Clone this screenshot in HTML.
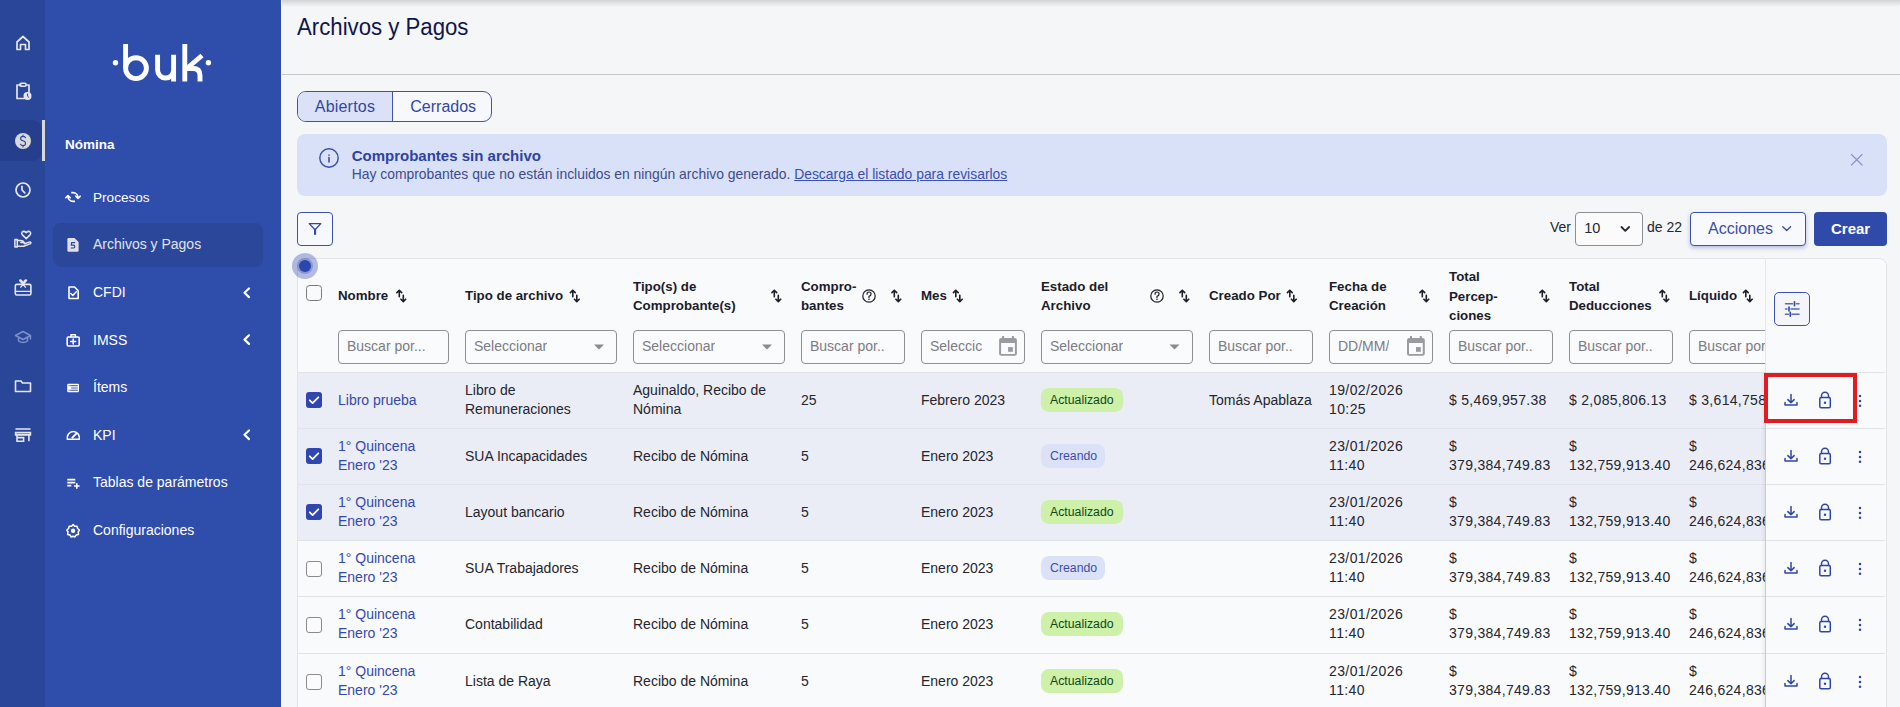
<!DOCTYPE html>
<html><head><meta charset="utf-8">
<style>
*{box-sizing:border-box;margin:0;padding:0}
html,body{width:1900px;height:707px;overflow:hidden;background:#f5f6f8;font-family:"Liberation Sans",sans-serif;color:#26262e;position:relative}
.a{position:absolute}
.t{position:absolute;white-space:nowrap}
#rail{left:0;top:0;width:45px;height:707px;background:#2a4698}
#side{left:45px;top:0;width:236px;height:707px;background:#2f4dab}
.nav{position:absolute;left:93px;font-size:14px;color:#fff;white-space:nowrap;line-height:16px}
#topsh{left:281px;top:0;width:1619px;height:7px;background:linear-gradient(#d3d4d7,#f5f6f8)}
</style></head>
<body>
<div id="rail" class="a"></div>
<div id="side" class="a"></div>
<div id="topsh" class="a"></div>
<!-- rail active -->
<div class="a" style="left:-10px;top:120px;width:52px;height:41px;background:#263f8c;border-radius:10px"></div>
<div class="a" style="left:42px;top:120px;width:3px;height:41px;background:#d9d9dc"></div>
<div class="a" style="left:53px;top:223px;width:210px;height:44px;background:#2b479a;border-radius:8px"></div>
<div class="nav" style="left:65px;top:137.4px;font-weight:700;font-size:13.5px">Nómina</div>
<div class="nav" style="top:189.5px;font-size:13.6px">Procesos</div>
<div class="nav" style="top:236.3px;color:#e2e3ea">Archivos y Pagos</div>
<div class="nav" style="top:284.3px">CFDI</div>
<div class="nav" style="top:331.8px">IMSS</div>
<div class="nav" style="top:378.9px">Ítems</div>
<div class="nav" style="top:426.9px">KPI</div>
<div class="nav" style="top:474px">Tablas de parámetros</div>
<div class="nav" style="top:522.2px">Configuraciones</div>
<svg class="a" style="left:0;top:0" width="281" height="707" viewBox="0 0 281 707" fill="none" stroke="#f0f0f4" stroke-width="1.6" stroke-linecap="round" stroke-linejoin="round">
 <!-- logo -->
 <g fill="#fff" stroke="none"><circle cx="115.5" cy="62.7" r="2.7"/><circle cx="208.4" cy="62.7" r="2.7"/></g>
 <g stroke="#fff" stroke-width="4.9" stroke-linecap="butt">
  <path d="M125.6 44 V68.2"/>
  <circle cx="136" cy="68.2" r="10.4"/>
  <path d="M157.6 54.8 V70 A8 8 0 0 0 173.6 70 M173.6 54.8 V81.5"/>
  <path d="M184.8 44 V81.5"/>
  <path d="M202 55.5 L188.5 67"/><path d="M187 68.5 H193 Q200 68.5 200 75.5 V81.5"/>
 </g>
 <!-- rail icons -->
 <path d="M17 49.5 V42 L23 36.5 L29 42 V49.5 H25.5 V44.5 H20.5 V49.5 Z" stroke="#e6e6ec" stroke-width="1.7"/>
 <path d="M21 85 H17 V98.5 H24 M26.5 85 H29 V92" stroke="#e6e6ec" stroke-width="1.7"/>
 <rect x="20" y="83.3" width="6" height="3" rx="1" stroke="#e6e6ec" stroke-width="1.5"/>
 <circle cx="27.5" cy="96" r="4" fill="#e6e6ec" stroke="none"/>
 <path d="M27.5 94 V96.2 L28.8 97.3" stroke="#2a4698" stroke-width="1"/>
 <circle cx="23" cy="141" r="8" fill="#d9d9dc" stroke="none"/>
 <path d="M25.4 137.6 Q24.6 136.4 23 136.4 Q20.6 136.4 20.6 138.6 Q20.6 140.4 23 140.8 Q25.5 141.3 25.5 143.4 Q25.5 145.6 23 145.6 Q21.3 145.6 20.5 144.3 M23 135 V136.4 M23 145.6 V147" stroke="#2a4698" stroke-width="1.1"/>
 <circle cx="23" cy="190" r="7" stroke="#e6e6ec" stroke-width="1.7"/>
 <path d="M22 186.3 V190 L24.8 192.8" stroke="#e6e6ec" stroke-width="1.7"/>
 <path d="M14.9 239.6 H17.3 V246.9 H14.9 Z" stroke="#e6e6ec" stroke-width="1.5"/>
 <path d="M17.3 240.6 H20.5 Q23.2 240.6 24.3 242.6 H20.8 M17.3 246.3 H23.6 L30.6 243.6 Q31.4 242.1 29.9 241.9 L24.3 243.7" stroke="#e6e6ec" stroke-width="1.5"/>
 <path d="M26.2 238.6 L22.4 234.9 Q21 233.4 22.2 232 Q23.9 230.5 26.2 232.6 Q28.5 230.5 30.2 232 Q31.4 233.4 30 234.9 Z" stroke="#e6e6ec" stroke-width="1.5"/>
 <rect x="15.3" y="284.4" width="15.6" height="10.6" rx="1.4" stroke="#e6e6ec" stroke-width="1.6"/>
 <path d="M15.3 291.3 H30.9 M23.1 284.4 L20 281 Q19 280 20.3 280 Q22.5 280.5 23.1 284.4 Q23.7 280.5 25.9 280 Q27.2 280 26.2 281 L23.1 284.4 M23.1 284.4 L20.8 287.2 M23.1 284.4 L25.4 287.2" stroke="#e6e6ec" stroke-width="1.3"/>
 <path d="M23 331.5 L15.5 335.5 L23 339.5 L30.5 335.5 Z M18.5 337.5 V341 Q23 344 27.5 341 V337.5 M30.5 335.5 V339" stroke="#7d8fcb" stroke-width="1.5"/>
 <path d="M15.5 391.5 V381 H21 L22.5 383 H30.5 V391.5 Z" stroke="#e6e6ec" stroke-width="1.6"/>
 <path d="M15.5 429 H30.5 M15.6 432.6 H30.4 V434.9 H15.6 Z M17 435 V441.2 H23.6 V437.6 H17 M28.9 435 V441.2" stroke="#e6e6ec" stroke-width="1.6" stroke-linejoin="miter" stroke-linecap="butt"/>
 <!-- sidebar icons -->
 <path d="M71.2 192.6 H73 A5 5 0 0 1 78 197.4 M75 201.4 H73 A5 5 0 0 1 68 196.6" stroke="#fff" stroke-width="1.6" stroke-linecap="butt"/>
 <path d="M75.8 196.2 L78 198.4 L80.2 196.2 M65.8 197.8 L68 195.6 L70.2 197.8" stroke="#fff" stroke-width="1.6"/>
 <path d="M68.5 238 H74.5 L78.6 242 V250.6 Q78.6 251.8 77.4 251.8 H68.6 Q67.4 251.8 67.4 250.6 V239.2 Q67.4 238 68.5 238 Z" fill="#e0e1e8" stroke="none"/>
 <path d="M74.7 242.6 H71.6 L71.3 245.2 H73.6 Q74.8 245.2 74.8 246.6 Q74.8 248 73.6 248 H71.2" stroke="#2b479a" stroke-width="1.2"/>
 <path d="M69 287 H74.5 L78.2 290.8 V298.5 H69 Z" stroke="#fff" stroke-width="1.6"/>
 <path d="M70.8 293.5 L72.8 295.5 L76.3 291.8" stroke="#fff" stroke-width="1.5"/>
 <rect x="67.2" y="337" width="12" height="9" rx="1.2" stroke="#fff" stroke-width="1.6"/>
 <path d="M71 337 V334.8 H75.4 V337 M73.2 339 V344 M70.7 341.5 H75.7" stroke="#fff" stroke-width="1.5"/>
 <rect x="67.2" y="383.7" width="11.8" height="8.5" rx="1.2" fill="#fff" stroke="none"/>
 <path d="M68.6 385.7 H77.8 M68.6 390.2 H77.8" stroke="#2f4dab" stroke-width="1" stroke-linecap="butt"/>
 <path d="M71.2 388 H77.8" stroke="#8d9ad0" stroke-width="1.6" stroke-linecap="butt"/>
 <path d="M69.9 385.2 V390.7" stroke="#fff" stroke-width="0.8" stroke-linecap="butt"/>
 <path d="M67.4 439.2 A6.1 6.1 0 1 1 79.2 439.2 Z" stroke="#fff" stroke-width="1.6"/>
 <path d="M72.4 437.6 L76.2 433.6" stroke="#fff" stroke-width="2"/>
 <path d="M67.3 479.6 H75.3 M67.3 482.6 H75.3 M67.3 485.6 H71.3 M74 486 H79.6 M76.8 483.2 V488.8" stroke="#fff" stroke-width="1.6" stroke-linecap="butt"/>
 <path d="M73.1 524.5 L74.6 526.3 L77 526.2 L77.6 528.5 L79.4 530 L78.2 532 L78.5 534.4 L76.2 535 L74.8 537 L73.1 536.2 L71.2 537 L69.9 535 L67.6 534.4 L68 532 L66.8 530 L68.6 528.5 L69.2 526.2 L71.6 526.3 Z" stroke="#fff" stroke-width="1.5"/>
 <circle cx="73.1" cy="530.8" r="2.2" fill="#fff" stroke="none"/>
 <!-- chevrons -->
 <path d="M249 288.5 L244.5 292.8 L249 297.1 M249 335.3 L244.5 339.6 L249 343.9 M249 430.5 L244.5 434.8 L249 439.1" stroke="#fff" stroke-width="2.2"/>
</svg>
<div class="t" style="left:297.3px;top:14.10px;font-size:23px;line-height:26px;font-weight:400;color:#10154a;transform:scaleX(0.965);transform-origin:0 0;">Archivos y Pagos</div>
<div class="a" style="left:281px;top:74px;width:1619px;height:1px;background:#c6c7cb"></div>
<div class="a" style="left:297px;top:91px;width:195px;height:31px;border:1px solid #3d52a8;border-radius:9px;overflow:hidden;background:#f7f8fb"></div>
<div class="a" style="left:298px;top:92px;width:94px;height:29px;background:#dbe2f7;border-radius:8px 0 0 8px"></div>
<div class="a" style="left:392px;top:91px;width:1px;height:31px;background:#3d52a8"></div>
<div class="t" style="left:314.8px;top:98.00px;font-size:16px;line-height:17px;font-weight:400;color:#3047a6;letter-spacing:0.2px;">Abiertos</div>
<div class="t" style="left:410.3px;top:98.00px;font-size:16px;line-height:17px;font-weight:400;color:#3047a6;">Cerrados</div>
<div class="a" style="left:297px;top:134px;width:1590px;height:62px;background:#d9e1f9;border-radius:8px"></div>
<div class="t" style="left:351.7px;top:146.70px;font-size:15px;line-height:17px;font-weight:700;color:#2f43a0;">Comprobantes sin archivo</div>
<div class="t" style="left:351.7px;top:165.70px;font-size:13.9px;line-height:16px;font-weight:400;color:#3e4b8c;">Hay comprobantes que no están incluidos en ningún archivo generado. <span style="color:#3a4fb0;text-decoration:underline">Descarga el listado para revisarlos</span></div>
<div class="a" style="left:297px;top:212px;width:36px;height:34px;border:1px solid #3d52a8;border-radius:4px;background:#f7f8fb"></div>
<div class="t" style="left:1550px;top:219.10px;font-size:14px;line-height:16px;font-weight:400;color:#26262e;">Ver</div>
<div class="a" style="left:1575px;top:212px;width:68px;height:33.5px;border:1px solid #8d8d94;border-radius:4px;background:#fbfbfc"></div>
<div class="t" style="left:1584.2px;top:220.00px;font-size:14.5px;line-height:16px;font-weight:400;color:#26262e;">10</div>
<div class="t" style="left:1647px;top:219.10px;font-size:14px;line-height:16px;font-weight:400;color:#26262e;">de 22</div>
<div class="a" style="left:1690px;top:212px;width:116px;height:33.5px;border:1.2px solid #3b51ab;border-radius:4px;background:#f8f9fc;box-shadow:0 2px 4px rgba(59,81,171,0.35)"></div>
<div class="t" style="left:1708px;top:220.00px;font-size:16px;line-height:17px;font-weight:400;color:#3b4fa6;">Acciones</div>
<div class="a" style="left:1814px;top:212.3px;width:73px;height:33.3px;background:#2f4aa8;border-radius:4px"></div>
<div class="t" style="left:1831px;top:220.00px;font-size:15px;line-height:17px;font-weight:700;color:#ffffff;">Crear</div>
<div class="a" style="left:297px;top:258px;width:1590px;height:460px;background:#f9fafc;border:1px solid #e2e4e8;border-radius:8px 8px 0 0"></div>
<div class="a" style="left:281px;top:0px;width:1px;height:707px;background:#fbfbfd"></div>
<div class="t" style="left:338px;top:288.10px;font-size:13.3px;line-height:15px;font-weight:700;color:#1c1c2a;">Nombre</div>
<div class="t" style="left:465px;top:288.10px;font-size:13.3px;line-height:15px;font-weight:700;color:#1c1c2a;">Tipo de archivo</div>
<div class="t" style="left:633px;top:279.20px;font-size:13.3px;line-height:15px;font-weight:700;color:#1c1c2a;">Tipo(s) de</div>
<div class="t" style="left:633px;top:298.10px;font-size:13.3px;line-height:15px;font-weight:700;color:#1c1c2a;">Comprobante(s)</div>
<div class="t" style="left:801px;top:279.20px;font-size:13.3px;line-height:15px;font-weight:700;color:#1c1c2a;">Compro-</div>
<div class="t" style="left:801px;top:298.10px;font-size:13.3px;line-height:15px;font-weight:700;color:#1c1c2a;">bantes</div>
<div class="t" style="left:921px;top:288.10px;font-size:13.3px;line-height:15px;font-weight:700;color:#1c1c2a;">Mes</div>
<div class="t" style="left:1041px;top:279.20px;font-size:13.3px;line-height:15px;font-weight:700;color:#1c1c2a;">Estado del</div>
<div class="t" style="left:1041px;top:298.10px;font-size:13.3px;line-height:15px;font-weight:700;color:#1c1c2a;">Archivo</div>
<div class="t" style="left:1209px;top:288.10px;font-size:13.3px;line-height:15px;font-weight:700;color:#1c1c2a;">Creado Por</div>
<div class="t" style="left:1329px;top:279.20px;font-size:13.3px;line-height:15px;font-weight:700;color:#1c1c2a;">Fecha de</div>
<div class="t" style="left:1329px;top:298.10px;font-size:13.3px;line-height:15px;font-weight:700;color:#1c1c2a;">Creación</div>
<div class="t" style="left:1449px;top:269.40px;font-size:13.3px;line-height:15px;font-weight:700;color:#1c1c2a;">Total</div>
<div class="t" style="left:1449px;top:288.60px;font-size:13.3px;line-height:15px;font-weight:700;color:#1c1c2a;">Percep-</div>
<div class="t" style="left:1449px;top:308.10px;font-size:13.3px;line-height:15px;font-weight:700;color:#1c1c2a;">ciones</div>
<div class="t" style="left:1569px;top:279.20px;font-size:13.3px;line-height:15px;font-weight:700;color:#1c1c2a;">Total</div>
<div class="t" style="left:1569px;top:298.10px;font-size:13.3px;line-height:15px;font-weight:700;color:#1c1c2a;">Deducciones</div>
<div class="t" style="left:1689px;top:288.10px;font-size:13.3px;line-height:15px;font-weight:700;color:#1c1c2a;">Líquido</div>
<div class="a" style="left:338px;top:330px;width:111px;height:34px;border:1px solid #8f9096;border-radius:4px;background:#fafbfc"></div>
<div class="t" style="left:347px;top:338.00px;font-size:14px;line-height:16px;font-weight:400;color:#7c7c84;white-space:nowrap;overflow:hidden;">Buscar por...</div>
<div class="a" style="left:465px;top:330px;width:152px;height:34px;border:1px solid #8f9096;border-radius:4px;background:#fafbfc"></div>
<div class="t" style="left:474px;top:338.00px;font-size:14px;line-height:16px;font-weight:400;color:#7c7c84;white-space:nowrap;overflow:hidden;">Seleccionar</div>
<div class="a" style="left:633px;top:330px;width:152px;height:34px;border:1px solid #8f9096;border-radius:4px;background:#fafbfc"></div>
<div class="t" style="left:642px;top:338.00px;font-size:14px;line-height:16px;font-weight:400;color:#7c7c84;white-space:nowrap;overflow:hidden;">Seleccionar</div>
<div class="a" style="left:801px;top:330px;width:104px;height:34px;border:1px solid #8f9096;border-radius:4px;background:#fafbfc"></div>
<div class="t" style="left:810px;top:338.00px;font-size:14px;line-height:16px;font-weight:400;color:#7c7c84;white-space:nowrap;overflow:hidden;">Buscar por..</div>
<div class="a" style="left:921px;top:330px;width:104px;height:34px;border:1px solid #8f9096;border-radius:4px;background:#fafbfc"></div>
<div class="t" style="left:930px;top:338.00px;font-size:14px;line-height:16px;font-weight:400;color:#7c7c84;white-space:nowrap;overflow:hidden;">Seleccic</div>
<div class="a" style="left:1041px;top:330px;width:152px;height:34px;border:1px solid #8f9096;border-radius:4px;background:#fafbfc"></div>
<div class="t" style="left:1050px;top:338.00px;font-size:14px;line-height:16px;font-weight:400;color:#7c7c84;white-space:nowrap;overflow:hidden;">Seleccionar</div>
<div class="a" style="left:1209px;top:330px;width:104px;height:34px;border:1px solid #8f9096;border-radius:4px;background:#fafbfc"></div>
<div class="t" style="left:1218px;top:338.00px;font-size:14px;line-height:16px;font-weight:400;color:#7c7c84;white-space:nowrap;overflow:hidden;">Buscar por..</div>
<div class="a" style="left:1329px;top:330px;width:104px;height:34px;border:1px solid #8f9096;border-radius:4px;background:#fafbfc"></div>
<div class="t" style="left:1338px;top:338.00px;font-size:14px;line-height:16px;font-weight:400;color:#7c7c84;white-space:nowrap;overflow:hidden;">DD/MM/</div>
<div class="a" style="left:1449px;top:330px;width:104px;height:34px;border:1px solid #8f9096;border-radius:4px;background:#fafbfc"></div>
<div class="t" style="left:1458px;top:338.00px;font-size:14px;line-height:16px;font-weight:400;color:#7c7c84;white-space:nowrap;overflow:hidden;">Buscar por..</div>
<div class="a" style="left:1569px;top:330px;width:104px;height:34px;border:1px solid #8f9096;border-radius:4px;background:#fafbfc"></div>
<div class="t" style="left:1578px;top:338.00px;font-size:14px;line-height:16px;font-weight:400;color:#7c7c84;white-space:nowrap;overflow:hidden;">Buscar por..</div>
<div class="a" style="left:1689px;top:330px;width:110px;height:34px;border:1px solid #8f9096;border-radius:4px;background:#fafbfc"></div>
<div class="t" style="left:1698px;top:338.00px;font-size:14px;line-height:16px;font-weight:400;color:#7c7c84;white-space:nowrap;overflow:hidden;">Buscar por</div>
<div class="a" style="left:298px;top:372px;width:1468px;height:56.2px;background:#eaedf6;border-top:1px solid #e1e3e9"></div>
<div class="a" style="left:306px;top:392.1px;width:16px;height:16px;background:#2f46b0;border-radius:3px"></div>
<div class="t" style="left:338px;top:391.60px;font-size:14px;line-height:16px;font-weight:400;color:#3349ab;">Libro prueba</div>
<div class="t" style="left:465px;top:382.20px;font-size:14px;line-height:16px;font-weight:400;color:#25252e;">Libro de</div>
<div class="t" style="left:465px;top:401.00px;font-size:14px;line-height:16px;font-weight:400;color:#25252e;">Remuneraciones</div>
<div class="t" style="left:633px;top:382.20px;font-size:14px;line-height:16px;font-weight:400;color:#25252e;">Aguinaldo, Recibo de</div>
<div class="t" style="left:633px;top:401.00px;font-size:14px;line-height:16px;font-weight:400;color:#25252e;">Nómina</div>
<div class="t" style="left:801px;top:391.60px;font-size:14px;line-height:16px;font-weight:400;color:#25252e;">25</div>
<div class="t" style="left:921px;top:391.60px;font-size:14px;line-height:16px;font-weight:400;color:#25252e;">Febrero 2023</div>
<div class="a" style="left:1041px;top:388px;width:82px;height:24px;background:#cdf1a9;border-radius:8px"></div>
<div class="t" style="left:1050px;top:392.70px;font-size:12.3px;line-height:14px;font-weight:400;color:#124615;">Actualizado</div>
<div class="t" style="left:1209px;top:391.60px;font-size:14px;line-height:16px;font-weight:400;color:#25252e;">Tomás Apablaza</div>
<div class="t" style="left:1329px;top:382.20px;font-size:14px;line-height:16px;font-weight:400;color:#25252e;letter-spacing:0.4px;">19/02/2026</div>
<div class="t" style="left:1329px;top:401.00px;font-size:14px;line-height:16px;font-weight:400;color:#25252e;letter-spacing:0.4px;">10:25</div>
<div class="t" style="left:1449px;top:391.60px;font-size:14px;line-height:16px;font-weight:400;color:#25252e;letter-spacing:0.3px;">$ 5,469,957.38</div>
<div class="t" style="left:1569px;top:391.60px;font-size:14px;line-height:16px;font-weight:400;color:#25252e;letter-spacing:0.3px;">$ 2,085,806.13</div>
<div class="t" style="left:1689px;top:391.60px;font-size:14px;line-height:16px;font-weight:400;color:#25252e;width:76px;overflow:hidden;white-space:nowrap;letter-spacing:0.3px;">$ 3,614,758.25</div>
<div class="a" style="left:298px;top:428px;width:1468px;height:56.2px;background:#eaedf6;border-top:1px solid #e1e3e9"></div>
<div class="a" style="left:306px;top:448.1px;width:16px;height:16px;background:#2f46b0;border-radius:3px"></div>
<div class="t" style="left:338px;top:438.20px;font-size:14px;line-height:16px;font-weight:400;color:#3349ab;">1° Quincena</div>
<div class="t" style="left:338px;top:457.00px;font-size:14px;line-height:16px;font-weight:400;color:#3349ab;">Enero '23</div>
<div class="t" style="left:465px;top:447.60px;font-size:14px;line-height:16px;font-weight:400;color:#25252e;">SUA Incapacidades</div>
<div class="t" style="left:633px;top:447.60px;font-size:14px;line-height:16px;font-weight:400;color:#25252e;">Recibo de Nómina</div>
<div class="t" style="left:801px;top:447.60px;font-size:14px;line-height:16px;font-weight:400;color:#25252e;">5</div>
<div class="t" style="left:921px;top:447.60px;font-size:14px;line-height:16px;font-weight:400;color:#25252e;">Enero 2023</div>
<div class="a" style="left:1041px;top:444px;width:64px;height:24px;background:#dbe2f8;border-radius:8px"></div>
<div class="t" style="left:1050px;top:448.70px;font-size:12.3px;line-height:14px;font-weight:400;color:#3b4fa8;">Creando</div>
<div class="t" style="left:1329px;top:438.20px;font-size:14px;line-height:16px;font-weight:400;color:#25252e;letter-spacing:0.4px;">23/01/2026</div>
<div class="t" style="left:1329px;top:457.00px;font-size:14px;line-height:16px;font-weight:400;color:#25252e;letter-spacing:0.4px;">11:40</div>
<div class="t" style="left:1449px;top:438.20px;font-size:14px;line-height:16px;font-weight:400;color:#25252e;letter-spacing:0.3px;">$</div>
<div class="t" style="left:1449px;top:457.00px;font-size:14px;line-height:16px;font-weight:400;color:#25252e;letter-spacing:0.3px;">379,384,749.83</div>
<div class="t" style="left:1569px;top:438.20px;font-size:14px;line-height:16px;font-weight:400;color:#25252e;letter-spacing:0.3px;">$</div>
<div class="t" style="left:1569px;top:457.00px;font-size:14px;line-height:16px;font-weight:400;color:#25252e;letter-spacing:0.3px;">132,759,913.40</div>
<div class="t" style="left:1689px;top:438.20px;font-size:14px;line-height:16px;font-weight:400;color:#25252e;width:76px;overflow:hidden;white-space:nowrap;letter-spacing:0.3px;">$</div>
<div class="t" style="left:1689px;top:457.00px;font-size:14px;line-height:16px;font-weight:400;color:#25252e;width:76px;overflow:hidden;white-space:nowrap;letter-spacing:0.3px;">246,624,836.43</div>
<div class="a" style="left:298px;top:484px;width:1468px;height:56.2px;background:#eaedf6;border-top:1px solid #e1e3e9"></div>
<div class="a" style="left:306px;top:504.1px;width:16px;height:16px;background:#2f46b0;border-radius:3px"></div>
<div class="t" style="left:338px;top:494.20px;font-size:14px;line-height:16px;font-weight:400;color:#3349ab;">1° Quincena</div>
<div class="t" style="left:338px;top:513.00px;font-size:14px;line-height:16px;font-weight:400;color:#3349ab;">Enero '23</div>
<div class="t" style="left:465px;top:503.60px;font-size:14px;line-height:16px;font-weight:400;color:#25252e;">Layout bancario</div>
<div class="t" style="left:633px;top:503.60px;font-size:14px;line-height:16px;font-weight:400;color:#25252e;">Recibo de Nómina</div>
<div class="t" style="left:801px;top:503.60px;font-size:14px;line-height:16px;font-weight:400;color:#25252e;">5</div>
<div class="t" style="left:921px;top:503.60px;font-size:14px;line-height:16px;font-weight:400;color:#25252e;">Enero 2023</div>
<div class="a" style="left:1041px;top:500px;width:82px;height:24px;background:#cdf1a9;border-radius:8px"></div>
<div class="t" style="left:1050px;top:504.70px;font-size:12.3px;line-height:14px;font-weight:400;color:#124615;">Actualizado</div>
<div class="t" style="left:1329px;top:494.20px;font-size:14px;line-height:16px;font-weight:400;color:#25252e;letter-spacing:0.4px;">23/01/2026</div>
<div class="t" style="left:1329px;top:513.00px;font-size:14px;line-height:16px;font-weight:400;color:#25252e;letter-spacing:0.4px;">11:40</div>
<div class="t" style="left:1449px;top:494.20px;font-size:14px;line-height:16px;font-weight:400;color:#25252e;letter-spacing:0.3px;">$</div>
<div class="t" style="left:1449px;top:513.00px;font-size:14px;line-height:16px;font-weight:400;color:#25252e;letter-spacing:0.3px;">379,384,749.83</div>
<div class="t" style="left:1569px;top:494.20px;font-size:14px;line-height:16px;font-weight:400;color:#25252e;letter-spacing:0.3px;">$</div>
<div class="t" style="left:1569px;top:513.00px;font-size:14px;line-height:16px;font-weight:400;color:#25252e;letter-spacing:0.3px;">132,759,913.40</div>
<div class="t" style="left:1689px;top:494.20px;font-size:14px;line-height:16px;font-weight:400;color:#25252e;width:76px;overflow:hidden;white-space:nowrap;letter-spacing:0.3px;">$</div>
<div class="t" style="left:1689px;top:513.00px;font-size:14px;line-height:16px;font-weight:400;color:#25252e;width:76px;overflow:hidden;white-space:nowrap;letter-spacing:0.3px;">246,624,836.43</div>
<div class="a" style="left:298px;top:540px;width:1468px;height:56.2px;background:#f9fafc;border-top:1px solid #e1e3e9"></div>
<div class="a" style="left:306px;top:560.7px;width:16px;height:16px;border:1px solid #8a8a90;border-radius:3px;background:#fbfbfc"></div>
<div class="t" style="left:338px;top:550.20px;font-size:14px;line-height:16px;font-weight:400;color:#3349ab;">1° Quincena</div>
<div class="t" style="left:338px;top:569.00px;font-size:14px;line-height:16px;font-weight:400;color:#3349ab;">Enero '23</div>
<div class="t" style="left:465px;top:559.60px;font-size:14px;line-height:16px;font-weight:400;color:#25252e;">SUA Trabajadores</div>
<div class="t" style="left:633px;top:559.60px;font-size:14px;line-height:16px;font-weight:400;color:#25252e;">Recibo de Nómina</div>
<div class="t" style="left:801px;top:559.60px;font-size:14px;line-height:16px;font-weight:400;color:#25252e;">5</div>
<div class="t" style="left:921px;top:559.60px;font-size:14px;line-height:16px;font-weight:400;color:#25252e;">Enero 2023</div>
<div class="a" style="left:1041px;top:556px;width:64px;height:24px;background:#dbe2f8;border-radius:8px"></div>
<div class="t" style="left:1050px;top:560.70px;font-size:12.3px;line-height:14px;font-weight:400;color:#3b4fa8;">Creando</div>
<div class="t" style="left:1329px;top:550.20px;font-size:14px;line-height:16px;font-weight:400;color:#25252e;letter-spacing:0.4px;">23/01/2026</div>
<div class="t" style="left:1329px;top:569.00px;font-size:14px;line-height:16px;font-weight:400;color:#25252e;letter-spacing:0.4px;">11:40</div>
<div class="t" style="left:1449px;top:550.20px;font-size:14px;line-height:16px;font-weight:400;color:#25252e;letter-spacing:0.3px;">$</div>
<div class="t" style="left:1449px;top:569.00px;font-size:14px;line-height:16px;font-weight:400;color:#25252e;letter-spacing:0.3px;">379,384,749.83</div>
<div class="t" style="left:1569px;top:550.20px;font-size:14px;line-height:16px;font-weight:400;color:#25252e;letter-spacing:0.3px;">$</div>
<div class="t" style="left:1569px;top:569.00px;font-size:14px;line-height:16px;font-weight:400;color:#25252e;letter-spacing:0.3px;">132,759,913.40</div>
<div class="t" style="left:1689px;top:550.20px;font-size:14px;line-height:16px;font-weight:400;color:#25252e;width:76px;overflow:hidden;white-space:nowrap;letter-spacing:0.3px;">$</div>
<div class="t" style="left:1689px;top:569.00px;font-size:14px;line-height:16px;font-weight:400;color:#25252e;width:76px;overflow:hidden;white-space:nowrap;letter-spacing:0.3px;">246,624,836.43</div>
<div class="a" style="left:298px;top:596px;width:1468px;height:56.2px;background:#f9fafc;border-top:1px solid #e1e3e9"></div>
<div class="a" style="left:306px;top:616.7px;width:16px;height:16px;border:1px solid #8a8a90;border-radius:3px;background:#fbfbfc"></div>
<div class="t" style="left:338px;top:606.20px;font-size:14px;line-height:16px;font-weight:400;color:#3349ab;">1° Quincena</div>
<div class="t" style="left:338px;top:625.00px;font-size:14px;line-height:16px;font-weight:400;color:#3349ab;">Enero '23</div>
<div class="t" style="left:465px;top:615.60px;font-size:14px;line-height:16px;font-weight:400;color:#25252e;">Contabilidad</div>
<div class="t" style="left:633px;top:615.60px;font-size:14px;line-height:16px;font-weight:400;color:#25252e;">Recibo de Nómina</div>
<div class="t" style="left:801px;top:615.60px;font-size:14px;line-height:16px;font-weight:400;color:#25252e;">5</div>
<div class="t" style="left:921px;top:615.60px;font-size:14px;line-height:16px;font-weight:400;color:#25252e;">Enero 2023</div>
<div class="a" style="left:1041px;top:612px;width:82px;height:24px;background:#cdf1a9;border-radius:8px"></div>
<div class="t" style="left:1050px;top:616.70px;font-size:12.3px;line-height:14px;font-weight:400;color:#124615;">Actualizado</div>
<div class="t" style="left:1329px;top:606.20px;font-size:14px;line-height:16px;font-weight:400;color:#25252e;letter-spacing:0.4px;">23/01/2026</div>
<div class="t" style="left:1329px;top:625.00px;font-size:14px;line-height:16px;font-weight:400;color:#25252e;letter-spacing:0.4px;">11:40</div>
<div class="t" style="left:1449px;top:606.20px;font-size:14px;line-height:16px;font-weight:400;color:#25252e;letter-spacing:0.3px;">$</div>
<div class="t" style="left:1449px;top:625.00px;font-size:14px;line-height:16px;font-weight:400;color:#25252e;letter-spacing:0.3px;">379,384,749.83</div>
<div class="t" style="left:1569px;top:606.20px;font-size:14px;line-height:16px;font-weight:400;color:#25252e;letter-spacing:0.3px;">$</div>
<div class="t" style="left:1569px;top:625.00px;font-size:14px;line-height:16px;font-weight:400;color:#25252e;letter-spacing:0.3px;">132,759,913.40</div>
<div class="t" style="left:1689px;top:606.20px;font-size:14px;line-height:16px;font-weight:400;color:#25252e;width:76px;overflow:hidden;white-space:nowrap;letter-spacing:0.3px;">$</div>
<div class="t" style="left:1689px;top:625.00px;font-size:14px;line-height:16px;font-weight:400;color:#25252e;width:76px;overflow:hidden;white-space:nowrap;letter-spacing:0.3px;">246,624,836.43</div>
<div class="a" style="left:298px;top:653px;width:1468px;height:56.2px;background:#f9fafc;border-top:1px solid #e1e3e9"></div>
<div class="a" style="left:306px;top:673.7px;width:16px;height:16px;border:1px solid #8a8a90;border-radius:3px;background:#fbfbfc"></div>
<div class="t" style="left:338px;top:663.20px;font-size:14px;line-height:16px;font-weight:400;color:#3349ab;">1° Quincena</div>
<div class="t" style="left:338px;top:682.00px;font-size:14px;line-height:16px;font-weight:400;color:#3349ab;">Enero '23</div>
<div class="t" style="left:465px;top:672.60px;font-size:14px;line-height:16px;font-weight:400;color:#25252e;">Lista de Raya</div>
<div class="t" style="left:633px;top:672.60px;font-size:14px;line-height:16px;font-weight:400;color:#25252e;">Recibo de Nómina</div>
<div class="t" style="left:801px;top:672.60px;font-size:14px;line-height:16px;font-weight:400;color:#25252e;">5</div>
<div class="t" style="left:921px;top:672.60px;font-size:14px;line-height:16px;font-weight:400;color:#25252e;">Enero 2023</div>
<div class="a" style="left:1041px;top:669px;width:82px;height:24px;background:#cdf1a9;border-radius:8px"></div>
<div class="t" style="left:1050px;top:673.70px;font-size:12.3px;line-height:14px;font-weight:400;color:#124615;">Actualizado</div>
<div class="t" style="left:1329px;top:663.20px;font-size:14px;line-height:16px;font-weight:400;color:#25252e;letter-spacing:0.4px;">23/01/2026</div>
<div class="t" style="left:1329px;top:682.00px;font-size:14px;line-height:16px;font-weight:400;color:#25252e;letter-spacing:0.4px;">11:40</div>
<div class="t" style="left:1449px;top:663.20px;font-size:14px;line-height:16px;font-weight:400;color:#25252e;letter-spacing:0.3px;">$</div>
<div class="t" style="left:1449px;top:682.00px;font-size:14px;line-height:16px;font-weight:400;color:#25252e;letter-spacing:0.3px;">379,384,749.83</div>
<div class="t" style="left:1569px;top:663.20px;font-size:14px;line-height:16px;font-weight:400;color:#25252e;letter-spacing:0.3px;">$</div>
<div class="t" style="left:1569px;top:682.00px;font-size:14px;line-height:16px;font-weight:400;color:#25252e;letter-spacing:0.3px;">132,759,913.40</div>
<div class="t" style="left:1689px;top:663.20px;font-size:14px;line-height:16px;font-weight:400;color:#25252e;width:76px;overflow:hidden;white-space:nowrap;letter-spacing:0.3px;">$</div>
<div class="t" style="left:1689px;top:682.00px;font-size:14px;line-height:16px;font-weight:400;color:#25252e;width:76px;overflow:hidden;white-space:nowrap;letter-spacing:0.3px;">246,624,836.43</div>
<div class="a" style="left:1761px;top:372px;width:5px;height:340px;background:linear-gradient(90deg,rgba(0,0,0,0),rgba(0,0,0,0.07))"></div>
<div class="a" style="left:1765px;top:259px;width:121px;height:460px;background:#f9fafc;border-left:1px solid #e6e7eb;border-radius:0 7px 0 0"></div>
<div class="a" style="left:1765px;top:372px;width:1px;height:340px;background:#c9cbd1"></div>
<div class="a" style="left:1774px;top:292px;width:36px;height:34px;border:1.3px solid #3b51ab;border-radius:5px;background:#f4f5f8"></div>
<div class="a" style="left:1766px;top:372px;width:119px;height:1px;background:#e1e3e9"></div>
<div class="a" style="left:1766px;top:428px;width:119px;height:1px;background:#e1e3e9"></div>
<div class="a" style="left:1766px;top:484px;width:119px;height:1px;background:#e1e3e9"></div>
<div class="a" style="left:1766px;top:540px;width:119px;height:1px;background:#e1e3e9"></div>
<div class="a" style="left:1766px;top:596px;width:119px;height:1px;background:#e1e3e9"></div>
<div class="a" style="left:1766px;top:653px;width:119px;height:1px;background:#e1e3e9"></div>
<svg class="a" style="left:0;top:0" width="1900" height="707" viewBox="0 0 1900 707" fill="none" stroke-linecap="round" stroke-linejoin="round"><circle cx="329" cy="158" r="9.2" stroke="#3a4fa6" stroke-width="1.4"/>
<path d="M329 155 V155.2 M329 157.5 V162" stroke="#3a4fa6" stroke-width="1.6"/>
<path d="M1851.5 154.5 L1862 165 M1862 154.5 L1851.5 165" stroke="#8a94c6" stroke-width="1.2"/>
<path d="M309.2 223.6 H320.8 L315 229.8 Z" stroke="#2f46b0" stroke-width="1.3"/>
<rect x="314" y="229" width="2.1" height="5.8" fill="#2f46b0" stroke="none"/>
<path d="M1621.5 227 L1625.3 230.8 L1629.1 227" stroke="#26262e" stroke-width="1.8"/>
<path d="M1782.8 226.8 L1786.7 230.5 L1790.6 226.8" stroke="#3b4fa6" stroke-width="1.4"/>
<circle cx="305" cy="266" r="13" fill="#2f46b0" fill-opacity="0.35" stroke="none"/>
<circle cx="305" cy="266" r="8" fill="#2f46b0" fill-opacity="0.3" stroke="none"/>
<circle cx="305" cy="266" r="6" fill="#2d46ac" stroke="none"/>
<rect x="306.5" y="285.5" width="15" height="15" rx="3" stroke="#7a7a80" stroke-width="1"/>
<path d="M399.3 296.8 V290.2 M396.9 292.6 L399.3 290.2 L401.7 292.6 M403.3 295.2 V301.6 M400.9 299.2 L403.3 301.6 L405.7 299.2" stroke="#1c1c2a" stroke-width="1.6"/>
<path d="M572.8 296.8 V290.2 M570.4 292.6 L572.8 290.2 L575.2 292.6 M576.8 295.2 V301.6 M574.4 299.2 L576.8 301.6 L579.2 299.2" stroke="#1c1c2a" stroke-width="1.6"/>
<path d="M774.3 296.8 V290.2 M771.9 292.6 L774.3 290.2 L776.7 292.6 M778.3 295.2 V301.6 M775.9 299.2 L778.3 301.6 L780.7 299.2" stroke="#1c1c2a" stroke-width="1.6"/>
<path d="M894.3 296.8 V290.2 M891.9 292.6 L894.3 290.2 L896.7 292.6 M898.3 295.2 V301.6 M895.9 299.2 L898.3 301.6 L900.7 299.2" stroke="#1c1c2a" stroke-width="1.6"/>
<path d="M955.8 296.8 V290.2 M953.4 292.6 L955.8 290.2 L958.2 292.6 M959.8 295.2 V301.6 M957.4 299.2 L959.8 301.6 L962.2 299.2" stroke="#1c1c2a" stroke-width="1.6"/>
<path d="M1182.3 296.8 V290.2 M1179.9 292.6 L1182.3 290.2 L1184.7 292.6 M1186.3 295.2 V301.6 M1183.9 299.2 L1186.3 301.6 L1188.7 299.2" stroke="#1c1c2a" stroke-width="1.6"/>
<path d="M1289.8 296.8 V290.2 M1287.4 292.6 L1289.8 290.2 L1292.2 292.6 M1293.8 295.2 V301.6 M1291.4 299.2 L1293.8 301.6 L1296.2 299.2" stroke="#1c1c2a" stroke-width="1.6"/>
<path d="M1422.3 296.8 V290.2 M1419.9 292.6 L1422.3 290.2 L1424.7 292.6 M1426.3 295.2 V301.6 M1423.9 299.2 L1426.3 301.6 L1428.7 299.2" stroke="#1c1c2a" stroke-width="1.6"/>
<path d="M1542.3 296.8 V290.2 M1539.9 292.6 L1542.3 290.2 L1544.7 292.6 M1546.3 295.2 V301.6 M1543.9 299.2 L1546.3 301.6 L1548.7 299.2" stroke="#1c1c2a" stroke-width="1.6"/>
<path d="M1662.3 296.8 V290.2 M1659.9 292.6 L1662.3 290.2 L1664.7 292.6 M1666.3 295.2 V301.6 M1663.9 299.2 L1666.3 301.6 L1668.7 299.2" stroke="#1c1c2a" stroke-width="1.6"/>
<path d="M1745.8 296.8 V290.2 M1743.4 292.6 L1745.8 290.2 L1748.2 292.6 M1749.8 295.2 V301.6 M1747.4 299.2 L1749.8 301.6 L1752.2 299.2" stroke="#1c1c2a" stroke-width="1.6"/>
<circle cx="869" cy="296" r="6.2" stroke="#1c1c2a" stroke-width="1.2"/>
<path d="M867 294.2 Q867 292 869 292 Q871.1 292 871.1 294 Q871.1 295.5 869 296.4 V297.4" stroke="#1c1c2a" stroke-width="1.2"/>
<circle cx="869" cy="299.3" r="0.8" fill="#1c1c2a" stroke="none"/>
<circle cx="1157" cy="296" r="6.2" stroke="#1c1c2a" stroke-width="1.2"/>
<path d="M1155 294.2 Q1155 292 1157 292 Q1159.1 292 1159.1 294 Q1159.1 295.5 1157 296.4 V297.4" stroke="#1c1c2a" stroke-width="1.2"/>
<circle cx="1157" cy="299.3" r="0.8" fill="#1c1c2a" stroke="none"/>
<path d="M594 344.5 L604 344.5 L599 349.5 Z" fill="#8a8a90" stroke="none"/>
<path d="M762 344.5 L772 344.5 L767 349.5 Z" fill="#8a8a90" stroke="none"/>
<path d="M1169.5 344.5 L1179.5 344.5 L1174.5 349.5 Z" fill="#8a8a90" stroke="none"/>
<rect x="999.1" y="337.9" width="17.8" height="17.8" rx="2.2" fill="#9a9aa0" stroke="none"/>
<rect x="1001.1" y="343" width="13.8" height="11" fill="#fafbfc" stroke="none"/>
<rect x="1002.1" y="336" width="2" height="3" fill="#9a9aa0" stroke="none"/>
<rect x="1011.9" y="336" width="2" height="3" fill="#9a9aa0" stroke="none"/>
<rect x="1008.1" y="347.1" width="4.8" height="4.7" fill="#9a9aa0" stroke="none"/>
<rect x="1407" y="337.9" width="17.8" height="17.8" rx="2.2" fill="#9a9aa0" stroke="none"/>
<rect x="1409" y="343" width="13.8" height="11" fill="#fafbfc" stroke="none"/>
<rect x="1410" y="336" width="2" height="3" fill="#9a9aa0" stroke="none"/>
<rect x="1419.8" y="336" width="2" height="3" fill="#9a9aa0" stroke="none"/>
<rect x="1416" y="347.1" width="4.8" height="4.7" fill="#9a9aa0" stroke="none"/>
<path d="M1785.5 303.8 H1792.5 M1796.5 303.8 H1799 M1785.5 309 H1787 M1791 309 H1799 M1785.5 314.2 H1788.5 M1792 314.2 H1799" stroke="#5a6bb0" stroke-width="1.6"/>
<path d="M1794.5 301.8 V305.8 M1789 307 V311 M1790.3 312.2 V316.2" stroke="#2f46b0" stroke-width="1.6"/>
<path d="M309.8 400.3 L312.6 403.1 L318.3 397.3" stroke="#fff" stroke-width="1.8"/>
<path d="M309.8 456.3 L312.6 459.1 L318.3 453.3" stroke="#fff" stroke-width="1.8"/>
<path d="M309.8 512.3000000000001 L312.6 515.1 L318.3 509.3" stroke="#fff" stroke-width="1.8"/>
<path d="M1791 394.4 V402.7 M1787.9 399.59999999999997 L1791 402.7 L1794.1 399.59999999999997 M1785 402.5 V405.09999999999997 H1797 V402.5" stroke="#2f46a6" stroke-width="1.5"/>
<rect x="1819.8" y="397.59999999999997" width="10.5" height="10.2" rx="1.3" stroke="#2f46a6" stroke-width="1.5"/>
<path d="M1821.5 397.59999999999997 V395.7 A3.5 3.5 0 0 1 1828.5 395.7 V397.59999999999997" stroke="#2f46a6" stroke-width="1.5"/>
<circle cx="1825" cy="402.7" r="1.2" fill="#2f46a6" stroke="none"/>
<circle cx="1860" cy="396.0" r="1.25" fill="#2f46a6" stroke="none"/>
<circle cx="1860" cy="400.9" r="1.25" fill="#2f46a6" stroke="none"/>
<circle cx="1860" cy="405.79999999999995" r="1.25" fill="#2f46a6" stroke="none"/>
<path d="M1791 450.4 V458.7 M1787.9 455.59999999999997 L1791 458.7 L1794.1 455.59999999999997 M1785 458.5 V461.09999999999997 H1797 V458.5" stroke="#2f46a6" stroke-width="1.5"/>
<rect x="1819.8" y="453.59999999999997" width="10.5" height="10.2" rx="1.3" stroke="#2f46a6" stroke-width="1.5"/>
<path d="M1821.5 453.59999999999997 V451.7 A3.5 3.5 0 0 1 1828.5 451.7 V453.59999999999997" stroke="#2f46a6" stroke-width="1.5"/>
<circle cx="1825" cy="458.7" r="1.2" fill="#2f46a6" stroke="none"/>
<circle cx="1860" cy="452.0" r="1.25" fill="#2f46a6" stroke="none"/>
<circle cx="1860" cy="456.9" r="1.25" fill="#2f46a6" stroke="none"/>
<circle cx="1860" cy="461.79999999999995" r="1.25" fill="#2f46a6" stroke="none"/>
<path d="M1791 506.4 V514.6999999999999 M1787.9 511.59999999999997 L1791 514.6999999999999 L1794.1 511.59999999999997 M1785 514.5 V517.1 H1797 V514.5" stroke="#2f46a6" stroke-width="1.5"/>
<rect x="1819.8" y="509.59999999999997" width="10.5" height="10.2" rx="1.3" stroke="#2f46a6" stroke-width="1.5"/>
<path d="M1821.5 509.59999999999997 V507.7 A3.5 3.5 0 0 1 1828.5 507.7 V509.59999999999997" stroke="#2f46a6" stroke-width="1.5"/>
<circle cx="1825" cy="514.6999999999999" r="1.2" fill="#2f46a6" stroke="none"/>
<circle cx="1860" cy="508.0" r="1.25" fill="#2f46a6" stroke="none"/>
<circle cx="1860" cy="512.9" r="1.25" fill="#2f46a6" stroke="none"/>
<circle cx="1860" cy="517.8" r="1.25" fill="#2f46a6" stroke="none"/>
<path d="M1791 562.4 V570.6999999999999 M1787.9 567.6 L1791 570.6999999999999 L1794.1 567.6 M1785 570.5 V573.1 H1797 V570.5" stroke="#2f46a6" stroke-width="1.5"/>
<rect x="1819.8" y="565.6" width="10.5" height="10.2" rx="1.3" stroke="#2f46a6" stroke-width="1.5"/>
<path d="M1821.5 565.6 V563.6999999999999 A3.5 3.5 0 0 1 1828.5 563.6999999999999 V565.6" stroke="#2f46a6" stroke-width="1.5"/>
<circle cx="1825" cy="570.6999999999999" r="1.2" fill="#2f46a6" stroke="none"/>
<circle cx="1860" cy="564.0" r="1.25" fill="#2f46a6" stroke="none"/>
<circle cx="1860" cy="568.9" r="1.25" fill="#2f46a6" stroke="none"/>
<circle cx="1860" cy="573.8" r="1.25" fill="#2f46a6" stroke="none"/>
<path d="M1791 618.4 V626.6999999999999 M1787.9 623.6 L1791 626.6999999999999 L1794.1 623.6 M1785 626.5 V629.1 H1797 V626.5" stroke="#2f46a6" stroke-width="1.5"/>
<rect x="1819.8" y="621.6" width="10.5" height="10.2" rx="1.3" stroke="#2f46a6" stroke-width="1.5"/>
<path d="M1821.5 621.6 V619.6999999999999 A3.5 3.5 0 0 1 1828.5 619.6999999999999 V621.6" stroke="#2f46a6" stroke-width="1.5"/>
<circle cx="1825" cy="626.6999999999999" r="1.2" fill="#2f46a6" stroke="none"/>
<circle cx="1860" cy="620.0" r="1.25" fill="#2f46a6" stroke="none"/>
<circle cx="1860" cy="624.9" r="1.25" fill="#2f46a6" stroke="none"/>
<circle cx="1860" cy="629.8" r="1.25" fill="#2f46a6" stroke="none"/>
<path d="M1791 675.4 V683.6999999999999 M1787.9 680.6 L1791 683.6999999999999 L1794.1 680.6 M1785 683.5 V686.1 H1797 V683.5" stroke="#2f46a6" stroke-width="1.5"/>
<rect x="1819.8" y="678.6" width="10.5" height="10.2" rx="1.3" stroke="#2f46a6" stroke-width="1.5"/>
<path d="M1821.5 678.6 V676.6999999999999 A3.5 3.5 0 0 1 1828.5 676.6999999999999 V678.6" stroke="#2f46a6" stroke-width="1.5"/>
<circle cx="1825" cy="683.6999999999999" r="1.2" fill="#2f46a6" stroke="none"/>
<circle cx="1860" cy="677.0" r="1.25" fill="#2f46a6" stroke="none"/>
<circle cx="1860" cy="681.9" r="1.25" fill="#2f46a6" stroke="none"/>
<circle cx="1860" cy="686.8" r="1.25" fill="#2f46a6" stroke="none"/>
<rect x="1766" y="375" width="89" height="46" stroke="#e11b1f" stroke-width="4" stroke-linecap="butt" stroke-linejoin="miter"/></svg>
</body></html>
